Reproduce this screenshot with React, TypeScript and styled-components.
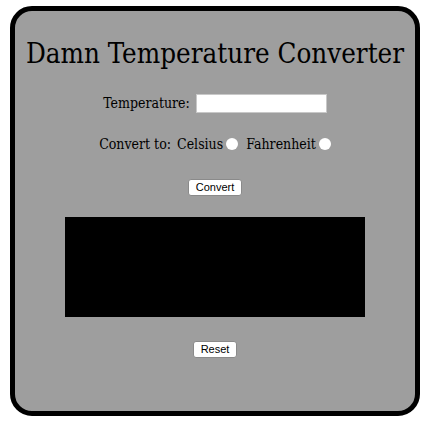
import React from "react";
import styled, { createGlobalStyle } from "styled-components";

const Global = createGlobalStyle`
  html, body { margin: 0; padding: 0; background: #ffffff; }
  #root { width: 430px; height: 424px; }
`;

const Panel = styled.div`
  box-sizing: border-box;
  margin: 6px 0 0 10px;
  width: 410px;
  height: 410px;
  border: 5px solid #000;
  border-radius: 22px;
  background: #9e9e9e;
  display: flex;
  flex-direction: column;
  align-items: center;
  font-family: "DejaVu Serif", serif;
  font-stretch: condensed;
  color: #000;
`;

const Title = styled.h1`
  margin: 22px 0 0 0;
  font-size: 27.5px;
  font-weight: normal;
  line-height: 40px;
  color: #000;
  white-space: nowrap;
`;

const Row = styled.div<{ $top: number }>`
  display: flex;
  align-items: center;
  margin-top: ${(p) => p.$top}px;
  font-size: 14px;
  height: 20px;
  white-space: nowrap;
`;

const Label = styled.span<{ $gap?: number; $lead?: number }>`
  margin-right: ${(p) => p.$gap ?? 0}px;
  margin-left: ${(p) => p.$lead ?? 0}px;
`;

const TextInput = styled.input`
  box-sizing: border-box;
  width: 131px;
  height: 19px;
  border: 1px solid #c8c8c8;
  background: #fff;
  padding: 0;
  margin: 0;
`;

const Radio = styled.span`
  display: inline-block;
  width: 12px;
  height: 12px;
  border-radius: 50%;
  background: #fff;
  margin-left: 3px;
`;

const Button = styled.button<{ $top: number }>`
  margin-top: ${(p) => p.$top}px;
  font-family: "Liberation Sans", Arial, sans-serif;
  font-size: 11px;
  line-height: 13px;
  padding: 1px 7px;
  background: #fff;
  border: 1px solid #8a8a8a;
  border-radius: 3px;
  color: #000;
`;

const Display = styled.div`
  margin-top: 21px;
  width: 300px;
  height: 100px;
  background: #000;
`;

export default function App() {
  return (
    <>
      <Global />
      <Panel>
        <Title>Damn Temperature Converter</Title>
        <Row $top={20}>
          <Label $gap={6}>Temperature:</Label>
          <TextInput type="text" />
        </Row>
        <Row $top={21}>
          <Label $gap={6}>Convert to:</Label>
          <Label>Celsius</Label>
          <Radio />
          <Label $lead={8}>Fahrenheit</Label>
          <Radio />
        </Row>
        <Button $top={25}>Convert</Button>
        <Display />
        <Button $top={24}>Reset</Button>
      </Panel>
    </>
  );
}
